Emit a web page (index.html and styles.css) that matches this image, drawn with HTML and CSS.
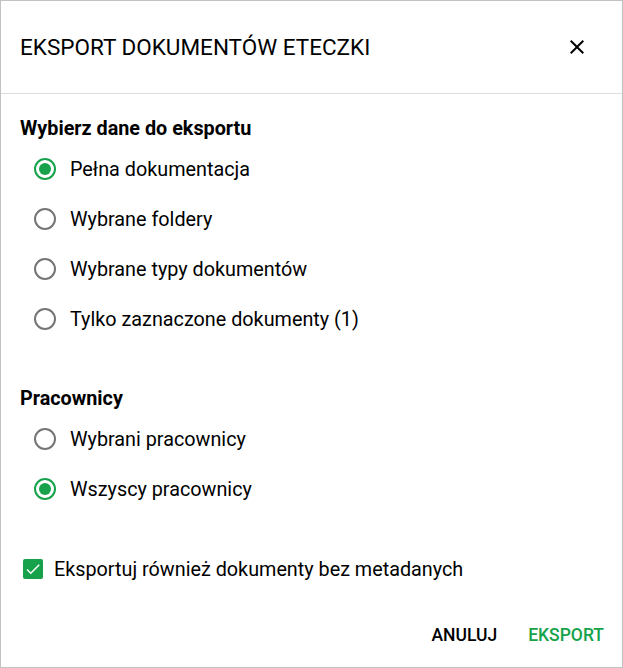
FILE: index.html
```html
<!DOCTYPE html>
<html>
<head>
    <title>Eksport dokumentów eteczki</title>
    <link rel="stylesheet" href="styles.css">
</head>
<body>
    <div class="dialog">
        <div class="dialog-header">
            <h2 class="dialog-title">EKSPORT DOKUMENTÓW ETECZKI</h2>
            <button class="close-btn" aria-label="Zamknij">
                <svg width="24" height="24" viewBox="0 0 24 24"><path d="M19 6.41 17.59 5 12 10.59 6.41 5 5 6.41 10.59 12 5 17.59 6.41 19 12 13.41 17.59 19 19 17.59 13.41 12z" fill="#000"/></svg>
            </button>
        </div>

        <div class="dialog-content">
            <div class="section-title">Wybierz dane do eksportu</div>
            <div class="radio-group">
                <label class="radio-row"><span class="radio checked"></span>Pełna dokumentacja</label>
                <label class="radio-row"><span class="radio"></span>Wybrane foldery</label>
                <label class="radio-row"><span class="radio"></span>Wybrane typy dokumentów</label>
                <label class="radio-row"><span class="radio"></span>Tylko zaznaczone dokumenty (1)</label>
            </div>

            <div class="section-title second">Pracownicy</div>
            <div class="radio-group">
                <label class="radio-row"><span class="radio"></span>Wybrani pracownicy</label>
                <label class="radio-row"><span class="radio checked"></span>Wszyscy pracownicy</label>
            </div>

            <label class="checkbox-row">
                <span class="checkbox">
                    <svg width="18" height="18" viewBox="0 0 24 24"><path d="M9 16.2 4.8 12l-1.4 1.4L9 19 21 7l-1.4-1.4z" fill="#fff"/></svg>
                </span>
                Eksportuj również dokumenty bez metadanych
            </label>
        </div>

        <div class="dialog-actions">
            <button class="text-btn">Anuluj</button>
            <button class="text-btn primary">Eksport</button>
        </div>
    </div>
</body>
</html>
```

FILE: styles.css
```css
body {
    margin: 0;
    font-family: Roboto, "Liberation Sans", sans-serif;
    color: #000;
    background-color: #fff;
}

.dialog {
    width: 623px;
    height: 668px;
    box-sizing: border-box;
    border: 1px solid #c2c2c2;
    display: flex;
    flex-direction: column;
}

.dialog-header {
    height: 92px;
    border-bottom: 1px solid #dedede;
    display: flex;
    align-items: center;
    justify-content: space-between;
    padding: 0 33px 0 19px;
}

.dialog-title {
    margin: 0;
    font-size: 22.5px;
    font-weight: 400;
}

.close-btn {
    border: none;
    background: none;
    padding: 0;
    width: 24px;
    height: 24px;
    cursor: pointer;
}

.close-btn svg {
    display: block;
}

.dialog-content {
    padding: 23px 19px 0 19px;
    flex: 1;
}

.section-title {
    font-size: 19.8px;
    font-weight: 700;
    line-height: 24px;
    margin-bottom: 3px;
}

.section-title.second {
    margin-top: 43px;
}

.radio-group {
    display: flex;
    flex-direction: column;
    padding-left: 5px;
}

.radio-row {
    height: 50px;
    display: flex;
    align-items: center;
    gap: 5px;
    font-size: 19.8px;
    cursor: pointer;
}

.radio {
    width: 40px;
    height: 40px;
    display: flex;
    align-items: center;
    justify-content: center;
    position: relative;
}

.radio::before {
    content: "";
    width: 18px;
    height: 18px;
    border: 2px solid #757575;
    border-radius: 50%;
}

.radio.checked::before {
    border-color: #16a24a;
}

.radio.checked::after {
    content: "";
    position: absolute;
    width: 12px;
    height: 12px;
    border-radius: 50%;
    background-color: #16a24a;
}

.checkbox-row {
    margin-top: 35px;
    height: 40px;
    display: flex;
    align-items: center;
    gap: 11px;
    padding-left: 3px;
    font-size: 19.8px;
    cursor: pointer;
}

.checkbox {
    width: 20px;
    height: 20px;
    border-radius: 2px;
    background-color: #16a24a;
    display: flex;
    align-items: center;
    justify-content: center;
}

.dialog-actions {
    display: flex;
    justify-content: flex-end;
    gap: 13px;
    padding: 0 9px 13px 0;
}

.text-btn {
    border: none;
    background: none;
    font-family: Roboto, "Liberation Sans", sans-serif;
    font-size: 17.5px;
    font-weight: 500;
    text-transform: uppercase;
    padding: 9px 9px;
    color: #000;
    cursor: pointer;
}

.text-btn.primary {
    color: #16a24a;
}
```
